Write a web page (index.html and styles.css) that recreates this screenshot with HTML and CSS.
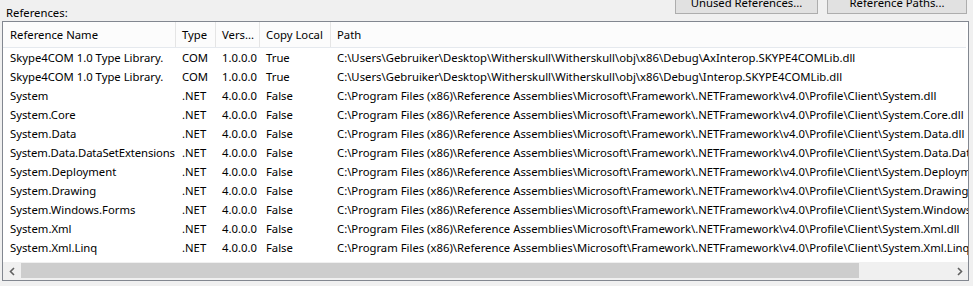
FILE: index.html
```html
<!DOCTYPE html>
<html lang="en">
<head>
  <meta charset="UTF-8" />
  <title>References</title>
  <link rel="stylesheet" href="styles.css">
</head>
<body>
  <div class="top">
    <div class="label">References:</div>
    <div class="buttons">
      <button class="btn btn-unused">Unused References...</button>
      <button class="btn btn-paths">Reference Paths...</button>
    </div>
  </div>

  <div class="listview">
    <div class="row header">
      <div class="cell">Reference Name</div>
      <div class="cell">Type</div>
      <div class="cell">Vers...</div>
      <div class="cell">Copy Local</div>
      <div class="cell">Path</div>
    </div>
    <div class="body">
      <div class="row"><div class="cell">Skype4COM 1.0 Type Library.</div><div class="cell">COM</div><div class="cell">1.0.0.0</div><div class="cell">True</div><div class="cell">C:\Users\Gebruiker\Desktop\Witherskull\Witherskull\obj\x86\Debug\AxInterop.SKYPE4COMLib.dll</div></div>
      <div class="row"><div class="cell">Skype4COM 1.0 Type Library.</div><div class="cell">COM</div><div class="cell">1.0.0.0</div><div class="cell">True</div><div class="cell">C:\Users\Gebruiker\Desktop\Witherskull\Witherskull\obj\x86\Debug\Interop.SKYPE4COMLib.dll</div></div>
      <div class="row"><div class="cell">System</div><div class="cell">.NET</div><div class="cell">4.0.0.0</div><div class="cell">False</div><div class="cell">C:\Program Files (x86)\Reference Assemblies\Microsoft\Framework\.NETFramework\v4.0\Profile\Client\System.dll</div></div>
      <div class="row"><div class="cell">System.Core</div><div class="cell">.NET</div><div class="cell">4.0.0.0</div><div class="cell">False</div><div class="cell">C:\Program Files (x86)\Reference Assemblies\Microsoft\Framework\.NETFramework\v4.0\Profile\Client\System.Core.dll</div></div>
      <div class="row"><div class="cell">System.Data</div><div class="cell">.NET</div><div class="cell">4.0.0.0</div><div class="cell">False</div><div class="cell">C:\Program Files (x86)\Reference Assemblies\Microsoft\Framework\.NETFramework\v4.0\Profile\Client\System.Data.dll</div></div>
      <div class="row"><div class="cell name-long">System.Data.DataSetExtensions</div><div class="cell">.NET</div><div class="cell">4.0.0.0</div><div class="cell">False</div><div class="cell">C:\Program Files (x86)\Reference Assemblies\Microsoft\Framework\.NETFramework\v4.0\Profile\Client\System.Data.DataSetExtensions.dll</div></div>
      <div class="row"><div class="cell">System.Deployment</div><div class="cell">.NET</div><div class="cell">4.0.0.0</div><div class="cell">False</div><div class="cell">C:\Program Files (x86)\Reference Assemblies\Microsoft\Framework\.NETFramework\v4.0\Profile\Client\System.Deployment.dll</div></div>
      <div class="row"><div class="cell">System.Drawing</div><div class="cell">.NET</div><div class="cell">4.0.0.0</div><div class="cell">False</div><div class="cell">C:\Program Files (x86)\Reference Assemblies\Microsoft\Framework\.NETFramework\v4.0\Profile\Client\System.Drawing.dll</div></div>
      <div class="row"><div class="cell">System.Windows.Forms</div><div class="cell">.NET</div><div class="cell">4.0.0.0</div><div class="cell">False</div><div class="cell">C:\Program Files (x86)\Reference Assemblies\Microsoft\Framework\.NETFramework\v4.0\Profile\Client\System.Windows.Forms.dll</div></div>
      <div class="row"><div class="cell">System.Xml</div><div class="cell">.NET</div><div class="cell">4.0.0.0</div><div class="cell">False</div><div class="cell">C:\Program Files (x86)\Reference Assemblies\Microsoft\Framework\.NETFramework\v4.0\Profile\Client\System.Xml.dll</div></div>
      <div class="row"><div class="cell">System.Xml.Linq</div><div class="cell">.NET</div><div class="cell">4.0.0.0</div><div class="cell">False</div><div class="cell">C:\Program Files (x86)\Reference Assemblies\Microsoft\Framework\.NETFramework\v4.0\Profile\Client\System.Xml.Linq.dll</div></div>
    </div>

    <!-- horizontal scrollbar -->
    <div class="hscroll">
      <div class="arrow">
        <svg width="8" height="9" viewBox="0 0 8 9"><path d="M6 1 L2.5 4.5 L6 8" fill="none" stroke="#606060" stroke-width="1.6"/></svg>
      </div>
      <div class="track"><div class="thumb"></div></div>
      <div class="arrow">
        <svg width="8" height="9" viewBox="0 0 8 9"><path d="M2 1 L5.5 4.5 L2 8" fill="none" stroke="#606060" stroke-width="1.6"/></svg>
      </div>
    </div>
  </div>
</body>
</html>
```

FILE: styles.css
```css
/* Reset */
* {
  margin: 0;
  padding: 0;
  box-sizing: border-box;
}

html, body {
  height: 100%;
  overflow: hidden;
  background-color: #f0f0f0;
  font-family: 'Noto Sans', sans-serif;
  font-size: 11.3px;
  color: #000;
}

/* Top bar: label and buttons */
.top {
  display: flex;
  height: 21px;
}

.label {
  padding: 4px 0 0 6px;
  line-height: 17px;
}

.buttons {
  display: flex;
  gap: 9px;
  margin-left: auto;
  margin-top: -9px;
  padding-right: 6px;
}

.btn {
  height: 23px;
  background: #e1e1e1;
  border: 1px solid #adadad;
  font-family: inherit;
  font-size: 11.3px;
  color: #000;
}

.btn-unused { width: 143px; }
.btn-paths { width: 140px; }

/* List view */
.listview {
  display: flex;
  flex-direction: column;
  width: 967px;
  height: 260px;
  margin-left: 2px;
  border: 1px solid #828790;
  background: #fff;
  overflow: hidden;
}

.row {
  display: grid;
  grid-template-columns: 173px 40px 44px 71px 1fr;
  height: 19px;
  line-height: 19px;
  white-space: nowrap;
}

.cell {
  padding-left: 6px;
  overflow: hidden;
}

.cell:first-child { padding-left: 7px; }
.cell:last-child { overflow: visible; }
.name-long { letter-spacing: -0.12px; }

.header {
  height: 26px;
  line-height: 25px;
  background: #fcfcfc;
  border-bottom: 1px solid #e5e9ee;
  margin-right: 2px;
}

.header .cell {
  border-right: 1px solid #e5e5e5;
}

.header .cell:last-child { border-right: none; }

.body {
  flex: 1;
}

/* Scrollbar */
.hscroll {
  display: flex;
  height: 18px;
  background: #f0f0f0;
}

.arrow {
  width: 17px;
  display: flex;
  align-items: center;
  justify-content: center;
}

.track {
  flex: 1;
  padding: 1px 1px 2px 1px;
}

.thumb {
  width: 838px;
  height: 100%;
  background: #cdcdcd;
}
```
